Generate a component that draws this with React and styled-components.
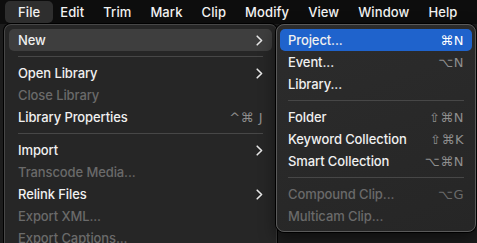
import styled, { createGlobalStyle } from "styled-components";

const GlobalStyle = createGlobalStyle`
  html, body {
    margin: 0;
    padding: 0;
    background: #1c1c1c;
    overflow: hidden;
  }
  body {
    font-family: Inter, "Noto Sans", "DejaVu Sans", sans-serif;
    -webkit-font-smoothing: antialiased;
  }
`;

const menus = ["File", "Edit", "Trim", "Mark", "Clip", "Modify", "View", "Window", "Help"];

const fileItems = [
  { label: "New", sub: true, hover: true },
  { sep: true },
  { label: "Open Library", sub: true },
  { label: "Close Library", disabled: true },
  { label: "Library Properties", keys: "^⌘ J" },
  { sep: true },
  { label: "Import", sub: true },
  { label: "Transcode Media...", disabled: true },
  { label: "Relink Files", sub: true },
  { label: "Export XML...", disabled: true },
  { label: "Export Captions...", disabled: true },
];

const newItems = [
  { label: "Project...", keys: "⌘N", active: true },
  { label: "Event...", keys: "⌥N" },
  { label: "Library..." },
  { sep: true },
  { label: "Folder", keys: "⇧⌘N" },
  { label: "Keyword Collection", keys: "⇧⌘K" },
  { label: "Smart Collection", keys: "⌥⌘N" },
  { sep: true },
  { label: "Compound Clip...", keys: "⌥G", disabled: true },
  { label: "Multicam Clip...", disabled: true },
];

function Chevron() {
  return (
    <svg width="7" height="11" viewBox="0 0 7 11">
      <path d="M1.2 1.2 L5.6 5.5 L1.2 9.8" fill="none" stroke="#e8e8e8" strokeWidth="1.6" strokeLinecap="round" strokeLinejoin="round" />
    </svg>
  );
}

function MenuList({ items, inset }) {
  return items.map((it, i) =>
    it.sep ? (
      <Separator key={i} $inset={inset} />
    ) : (
      <Row key={i} $inset={inset} $hover={it.hover} $active={it.active} $disabled={it.disabled}>
        <span>{it.label}</span>
        {it.sub && <Chevron />}
        {it.keys && <Keys $active={it.active} $disabled={it.disabled}>{it.keys}</Keys>}
      </Row>
    )
  );
}

export default function App() {
  return (
    <>
      <GlobalStyle />
      <MenuBar>
        {menus.map((m, i) => (
          <BarItem key={m} $open={i === 0}>{m}</BarItem>
        ))}
      </MenuBar>
      <Dropdown>
        <MenuList items={fileItems} inset={9} />
        <Submenu>
          <MenuList items={newItems} inset={8} />
        </Submenu>
      </Dropdown>
    </>
  );
}

const MenuBar = styled.div`
  height: 24px;
  background: #0d0d0d;
  display: flex;
  align-items: center;
  padding-left: 5px;
  white-space: nowrap;
`;

const BarItem = styled.div`
  height: 22px;
  margin-top: -1px;
  display: flex;
  align-items: center;
  padding: 0 ${(p) => (p.$open ? "13px" : "9.5px")};
  margin-right: ${(p) => (p.$open ? "-2.5px" : "0")};
  border-radius: 5px;
  background: ${(p) => (p.$open ? "#2e2e2e" : "transparent")};
  color: #f2f2f2;
  font-size: 13px;
  font-weight: 500;
  letter-spacing: 0.1px;
`;

const Dropdown = styled.div`
  position: relative;
  margin-left: 4px;
  width: 263px;
  padding: 4px;
  background: #262626;
  border: 1px solid #474747;
  border-right-color: #3a3a3a;
  border-radius: 7px 7px 0 0;
  box-shadow: 0 0 0 1px #000;
`;

const Submenu = styled.div`
  position: absolute;
  top: -1px;
  left: 271px;
  width: 192px;
  padding: 4px 3px;
  background: linear-gradient(160deg, #2c2c2c, #262626);
  border: 1px solid #5a5a5a;
  border-radius: 8px;
  box-shadow: 0 0 0 1px #000, 0 6px 16px rgba(0, 0, 0, 0.5);
`;

const Row = styled.div`
  height: 22px;
  display: flex;
  align-items: center;
  justify-content: space-between;
  padding: 0 ${(p) => p.$inset}px;
  border-radius: 5px;
  font-size: 13px;
  font-weight: 500;
  letter-spacing: -0.1px;
  white-space: nowrap;
  color: ${(p) => (p.$disabled ? "#6a6a6a" : "#f0f0f0")};
  background: ${(p) => (p.$active ? "#1f63cc" : p.$hover ? "#3e3e3e" : "transparent")};
`;

const Keys = styled.span`
  font-family: "DejaVu Sans", Inter, sans-serif;
  font-size: 13px;
  letter-spacing: 0.5px;
  color: ${(p) => (p.$active ? "#ffffff" : p.$disabled ? "#6a6a6a" : "#8e8e8e")};
`;

const Separator = styled.div`
  height: 11px;
  display: flex;
  align-items: center;
  padding: 0 ${(p) => p.$inset}px;

  &::after {
    content: "";
    flex: 1;
    height: 1px;
    background: #474747;
  }
`;
